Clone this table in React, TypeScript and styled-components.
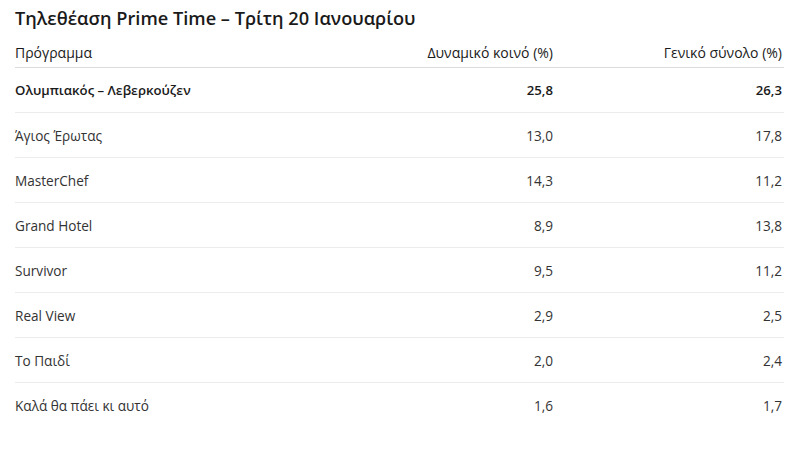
import React from "react";
import styled, { createGlobalStyle } from "styled-components";

const Global = createGlobalStyle`
  html, body { margin: 0; padding: 0; background: #fff; }
  body { font-family: "Open Sans", "Noto Sans", sans-serif; color: #222; }
  * { box-sizing: border-box; }
`;

const Page = styled.div`
  width: 812px;
  height: 465px;
  padding: 5px 28px 0 15px;
`;

const Title = styled.h1`
  margin: 0 0 7px;
  font-size: 18.2px;
  line-height: 26px;
  font-weight: 600;
  color: #1a1a1a;
`;

const Table = styled.div`
  display: grid;
  grid-template-columns: 1fr 220px 229px;
`;

const Cell = styled.div<{ $head?: boolean; $num?: boolean; $bold?: boolean; $last?: boolean }>`
  display: flex;
  align-items: center;
  justify-content: ${(p) => (p.$num ? "flex-end" : "flex-start")};
  padding-right: ${(p) => (p.$num ? "2px" : "0")};
  height: ${(p) => (p.$head ? "30px" : "45px")};
  font-size: ${(p) => (p.$head ? "14px" : p.$bold ? "13.2px" : "13.6px")};
  font-weight: ${(p) => (p.$bold ? 600 : p.$head ? 500 : 400)};
  color: ${(p) => (p.$head || p.$bold ? "#1a1a1a" : "#333")};
  border-bottom: ${(p) => (p.$last ? "none" : p.$head ? "1px solid #dcdcdc" : "1px solid #ececec")};
`;

const rows: [string, string, string][] = [
  ["Ολυμπιακός – Λεβερκούζεν", "25,8", "26,3"],
  ["Άγιος Έρωτας", "13,0", "17,8"],
  ["MasterChef", "14,3", "11,2"],
  ["Grand Hotel", "8,9", "13,8"],
  ["Survivor", "9,5", "11,2"],
  ["Real View", "2,9", "2,5"],
  ["Το Παιδί", "2,0", "2,4"],
  ["Καλά θα πάει κι αυτό", "1,6", "1,7"],
];

export default function App() {
  return (
    <Page>
      <Global />
      <Title>Τηλεθέαση Prime Time – Τρίτη 20 Ιανουαρίου</Title>
      <Table>
        <Cell $head>Πρόγραμμα</Cell>
        <Cell $head $num>Δυναμικό κοινό (%)</Cell>
        <Cell $head $num>Γενικό σύνολο (%)</Cell>
        {rows.map(([name, a, b], i) => {
          const bold = i === 0;
          const last = i === rows.length - 1;
          return (
            <React.Fragment key={name}>
              <Cell $bold={bold} $last={last}>{name}</Cell>
              <Cell $num $bold={bold} $last={last}>{a}</Cell>
              <Cell $num $bold={bold} $last={last}>{b}</Cell>
            </React.Fragment>
          );
        })}
      </Table>
    </Page>
  );
}
